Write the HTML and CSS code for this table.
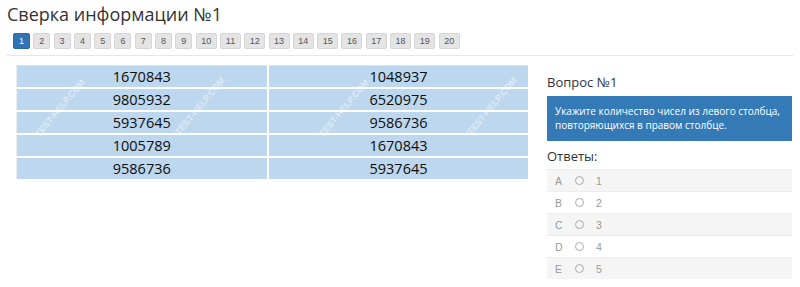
FILE: index.html
```html
<!DOCTYPE html>
<html lang="ru">
<head>
<meta charset="utf-8">
<link rel="stylesheet" href="styles.css">
</head>
<body>
<div class="page">
  <h1 class="title">Сверка информации №1</h1>
  <div class="pager">
    <span class="pg active">1</span><span class="pg">2</span><span class="pg">3</span><span class="pg">4</span><span class="pg">5</span><span class="pg">6</span><span class="pg">7</span><span class="pg">8</span><span class="pg">9</span><span class="pg wide">10</span><span class="pg wide">11</span><span class="pg wide">12</span><span class="pg wide">13</span><span class="pg wide">14</span><span class="pg wide">15</span><span class="pg wide">16</span><span class="pg wide">17</span><span class="pg wide">18</span><span class="pg wide">19</span><span class="pg wide">20</span>
  </div>
  <div class="rule"></div>
  <div class="main">
    <div class="left">
      <div class="tablewrap">
        <table class="nums">
          <colgroup><col class="c1"><col class="c2"></colgroup>
          <tr><td>1670843</td><td>1048937</td></tr>
          <tr><td>9805932</td><td>6520975</td></tr>
          <tr><td>5937645</td><td>9586736</td></tr>
          <tr><td>1005789</td><td>1670843</td></tr>
          <tr><td>9586736</td><td>5937645</td></tr>
        </table>
        <span class="wm wm1">TEST-HELP.COM</span>
        <span class="wm wm2">TEST-HELP.COM</span>
        <span class="wm wm3">TEST-HELP.COM</span>
        <span class="wm wm4">TEST-HELP.COM</span>
      </div>
    </div>
    <div class="right">
      <div class="qtitle">Вопрос №1</div>
      <div class="qbox">Укажите количество чисел из левого столбца, повторяющихся в правом столбце.</div>
      <div class="atitle">Ответы:</div>
      <ul class="answers">
        <li class="ans"><span class="letter">A</span><span class="radio"></span><span class="val">1</span></li>
        <li class="ans"><span class="letter">B</span><span class="radio"></span><span class="val">2</span></li>
        <li class="ans"><span class="letter">C</span><span class="radio"></span><span class="val">3</span></li>
        <li class="ans"><span class="letter">D</span><span class="radio"></span><span class="val">4</span></li>
        <li class="ans"><span class="letter">E</span><span class="radio"></span><span class="val">5</span></li>
      </ul>
    </div>
  </div>
</div>
</body>
</html>
```

FILE: styles.css
```css
* { box-sizing: border-box; }
body {
  margin: 0;
  background: #fff;
  font-family: "Open Sans", "Liberation Sans", sans-serif;
  color: #333;
}
.page {
  padding: 0 7px;
}
.title {
  margin: 0;
  padding-top: 2px;
  font-size: 18px;
  font-weight: 400;
  line-height: 24px;
  color: #333;
}
.pager {
  display: flex;
  gap: 3.3px;
  margin-top: 7px;
  padding-left: 6px;
}
.pg {
  display: flex;
  align-items: center;
  justify-content: center;
  width: 17px;
  height: 16px;
  background: #e4e4e4;
  border: 1px solid #d6d6d6;
  border-radius: 2px;
  font-family: "Liberation Sans", sans-serif;
  font-size: 9px;
  color: #555;
}
.pg.wide { width: 21px; }
.pg.active {
  background: #2f74b5;
  border-color: #2a6aa6;
  color: #fff;
}
.rule {
  height: 1px;
  background: #e6e6e6;
  margin-top: 6px;
}
.main {
  display: flex;
  gap: 20px;
  margin-top: 9px;
}
.left {
  width: 520px;
  padding-left: 9px;
}
.tablewrap {
  position: relative;
  width: 512px;
  overflow: hidden;
}
.nums {
  width: 512px;
  table-layout: fixed;
  border-collapse: collapse;
  border-top: 1px solid #e2e2e2;
  border-left: 1px solid #ececec;
}
.c1 { width: 251px; }
.c2 { width: 261px; }
.nums td {
  background: #bdd7ee;
  border: 2px solid #fff;
  border-top-width: 0;
  height: 23px;
  padding: 0;
  text-align: center;
  font-family: "Open Sans", "Liberation Sans", sans-serif;
  font-size: 14.5px;
  color: #0d0d0d;
  line-height: 21px;
}
.nums tr:first-child td { border-top: 0; height: 21px; }
.nums td:first-child { border-left: 0; }
.nums td:last-child { border-right: 0; }
.wm {
  position: absolute;
  font-family: "Liberation Sans", sans-serif;
  font-weight: 700;
  font-size: 9px;
  color: rgba(255,255,255,0.5);
  transform: rotate(-50deg);
  white-space: nowrap;
}
.wm1 { left: 8px; top: 38px; }
.wm2 { left: 148px; top: 36px; }
.wm3 { left: 292px; top: 38px; }
.wm4 { left: 440px; top: 36px; }
.right {
  width: 245px;
}
.qtitle {
  font-size: 13px;
  line-height: 18px;
  margin-top: 8px;
  color: #333;
}
.qbox {
  margin-top: 5px;
  background: #337ab7;
  color: #fff;
  font-size: 10px;
  line-height: 14px;
  padding: 8px 6px 9px 8px;
}
.atitle {
  font-size: 13px;
  line-height: 18px;
  margin-top: 6px;
  color: #333;
}
.answers {
  list-style: none;
  margin: 4px 0 0;
  padding: 0;
}
.ans {
  display: flex;
  align-items: center;
  height: 22px;
  padding-left: 8px;
  font-family: "Liberation Sans", sans-serif;
  font-size: 10.5px;
  color: #999;
  border-top: 1px solid #ededed;
}
.ans:nth-child(odd) { background: #f5f5f5; }
.letter { width: 20px; }
.radio {
  width: 9px;
  height: 9px;
  border: 1px solid #aaa;
  border-radius: 50%;
  margin-right: 12px;
}
```
